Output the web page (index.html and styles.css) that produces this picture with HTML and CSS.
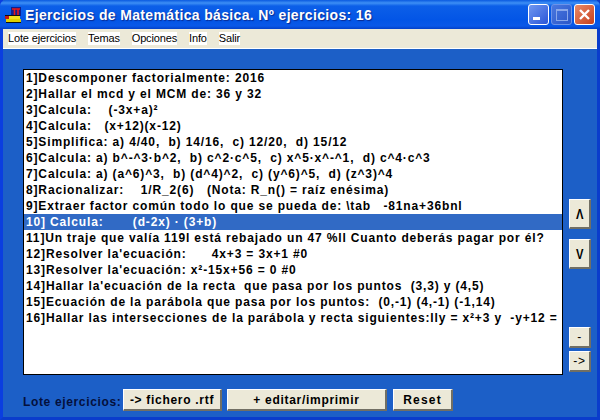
FILE: index.html
```html
<!DOCTYPE html>
<html>
<head>
    <meta charset="UTF-8">
    <title>Ejercicios de Matemática básica</title>
    <link rel="stylesheet" href="styles.css">
</head>
<body>
    <div class="window">
        <div class="titlebar">
            <svg class="app-icon" width="16" height="16" viewBox="0 0 16 16">
                <rect x="6" y="0" width="10" height="9" fill="#10208c"/>
                <path d="M7 2h8M9.5 2v7M13 2v7" stroke="#e81818" stroke-width="1.6" fill="none"/>
                <rect x="0" y="9" width="5" height="3" fill="#c01818"/>
                <rect x="4" y="9" width="11" height="3" fill="#f0e020"/>
                <rect x="1" y="12" width="15" height="3" fill="#e0d000"/>
                <path d="M0 8.5h15M1 15.5h15" stroke="#101010"/>
            </svg>
            <span class="title-text">Ejercicios de Matemática básica. Nº ejercicios: 16</span>
            <div class="title-buttons">
                <div class="wbtn wbtn-min"><span class="min-bar"></span></div>
                <div class="wbtn wbtn-max"><span class="max-box"></span></div>
                <div class="wbtn wbtn-close">
                    <svg width="13" height="13" viewBox="0 0 13 13"><path d="M2 2l9 9M11 2l-9 9" stroke="#fff" stroke-width="2.4"/></svg>
                </div>
            </div>
        </div>

        <div class="menubar">
            <span class="menu-item">Lote ejercicios</span>
            <span class="menu-item">Temas</span>
            <span class="menu-item">Opciones</span>
            <span class="menu-item">Info</span>
            <span class="menu-item">Salir</span>
        </div>

        <div class="content">
            <div class="main-row">
                <div class="listbox">
                    <div class="row">1]Descomponer factorialmente: 2016</div>
                    <div class="row">2]Hallar el mcd y el MCM de: 36 y 32</div>
                    <div class="row">3]Calcula:    (-3x+a)²</div>
                    <div class="row">4]Calcula:   (x+12)(x-12)</div>
                    <div class="row">5]Simplifica: a) 4/40,  b) 14/16,  c) 12/20,  d) 15/12</div>
                    <div class="row">6]Calcula: a) b^-^3·b^2,  b) c^2·c^5,  c) x^5·x^-^1,  d) c^4·c^3</div>
                    <div class="row">7]Calcula: a) (a^6)^3,  b) (d^4)^2,  c) (y^6)^5,  d) (z^3)^4</div>
                    <div class="row">8]Racionalizar:    1/R_2(6)   (Nota: R_n() = raíz enésima)</div>
                    <div class="row">9]Extraer factor común todo lo que se pueda de: \tab   -81na+36bnl</div>
                    <div class="row selected">10] Calcula:       (d-2x) · (3+b)</div>
                    <div class="row">11]Un traje que valía 119l está rebajado un 47 %ll Cuanto deberás pagar por él?</div>
                    <div class="row">12]Resolver la'ecuación:      4x+3 = 3x+1 #0</div>
                    <div class="row">13]Resolver la'ecuación: x²-15x+56 = 0 #0</div>
                    <div class="row">14]Hallar la'ecuación de la recta  que pasa por los puntos  (3,3) y (4,5)</div>
                    <div class="row">15]Ecuación de la parábola que pasa por los puntos:  (0,-1) (4,-1) (-1,14)</div>
                    <div class="row">16]Hallar las intersecciones de la parábola y recta siguientes:lly = x²+3 y  -y+12 =</div>
                </div>
                <div class="side-buttons">
                    <button class="btn btn-arrow"><span class="arrow-glyph">Λ</span></button>
                    <button class="btn btn-arrow"><span class="arrow-glyph">V</span></button>
                    <div class="side-spacer"></div>
                    <button class="btn btn-small">-</button>
                    <button class="btn btn-small">-&gt;</button>
                </div>
            </div>
            <div class="bottom-row">
                <span class="bottom-label">Lote ejercicios:</span>
                <button class="btn btn-file">-&gt; fichero .rtf</button>
                <button class="btn btn-edit">+ editar/imprimir</button>
                <button class="btn btn-reset">Reset</button>
            </div>
        </div>
    </div>
</body>
</html>
```

FILE: styles.css
```css
:root {
    --xp-blue: #1c5fc7;
    --xp-face: #ece9d8;
}

html, body {
    margin: 0;
    padding: 0;
    width: 600px;
    height: 420px;
    overflow: hidden;
}

body {
    font-family: 'Liberation Sans', Arial, sans-serif;
    color: #000;
}

.window {
    width: 600px;
    height: 420px;
    display: flex;
    flex-direction: column;
    box-sizing: border-box;
    background: var(--xp-blue);
    border-left: 3px solid #0a3ee0;
    border-right: 3px solid #0a3ccc;
    border-bottom: 3px solid #0a3ccc;
}

.titlebar {
    height: 29px;
    margin: 0 -3px;
    padding: 0 5px;
    flex: none;
    display: flex;
    align-items: center;
    background: linear-gradient(to bottom, #0a5ae0 0, #3d8ff5 3px, #0c5fe8 6px, #0355e6 20px, #0a58e8 26px, #0340c8 29px);
    border-radius: 6px 6px 0 0;
}

.app-icon {
    flex: none;
    margin-right: 4px;
}

.title-text {
    color: #fff;
    font-size: 14px;
    font-weight: bold;
    letter-spacing: 0.35px;
    white-space: nowrap;
    text-shadow: 1px 1px 1px #0a2a90;
}

.title-buttons {
    margin-left: auto;
    display: flex;
    gap: 2px;
}

.wbtn {
    width: 21px;
    height: 21px;
    box-sizing: border-box;
    border: 1px solid #fff;
    border-radius: 3px;
    display: flex;
    align-items: center;
    justify-content: center;
}

.wbtn-min { background: linear-gradient(135deg, #6f97f0, #2a56d8); }
.wbtn-max { background: linear-gradient(135deg, #4a78e0, #2a56c8); border-color: #6d93e8; }
.wbtn-close { background: linear-gradient(135deg, #e88a68, #c8401c); }

.min-bar {
    width: 7px;
    height: 3px;
    background: #fff;
    margin: 8px 5px 0 0;
}

.max-box {
    width: 10px;
    height: 9px;
    border: 1px solid #8aa8ea;
    border-top-width: 2px;
}

.menubar {
    height: 19px;
    flex: none;
    padding: 0 0 0 5px;
    display: flex;
    align-items: center;
    background: var(--xp-face);
    border-bottom: 1px solid #fff;
}

.menu-item {
    margin-right: 12px;
    background: #fff;
    font-size: 11px;
    letter-spacing: -0.15px;
    line-height: 13px;
}

.content {
    flex: 1;
    padding: 20px 6px 6px 20px;
    display: flex;
    flex-direction: column;
    min-height: 0;
}

.main-row {
    display: flex;
    height: 306px;
    flex: none;
}

.listbox {
    width: 540px;
    box-sizing: border-box;
    background: #fff;
    border: 1px solid #000;
    overflow: hidden;
}

.row {
    height: 16px;
    line-height: 16px;
    padding-left: 2px;
    font-size: 12px;
    font-weight: bold;
    letter-spacing: 0.85px;
    white-space: pre;
}

.row.selected {
    background: #316ac5;
    color: #fff;
}

.side-buttons {
    margin-left: 6px;
    width: 22px;
    padding: 130px 0 3px;
    display: flex;
    flex-direction: column;
    box-sizing: border-box;
}

.side-spacer {
    flex: 1;
}

.btn {
    margin: 0;
    padding: 0;
    box-sizing: border-box;
    background: var(--xp-face);
    color: #000;
    font-family: 'Liberation Sans', Arial, sans-serif;
    font-size: 12px;
    font-weight: bold;
    letter-spacing: 0.7px;
    border: 1px solid;
    border-color: #fff #716f64 #716f64 #fff;
    border-right-width: 2px;
    border-bottom-width: 2px;
}

.btn-arrow {
    width: 22px;
    height: 30px;
    font-size: 14px;
    letter-spacing: 0;
    margin-bottom: 10px;
}

.arrow-glyph {
    display: inline-block;
    transform: scaleX(0.8);
}

.btn-small {
    width: 22px;
    height: 21px;
    font-weight: normal;
    margin-top: 3px;
}

.bottom-row {
    margin-top: 14px;
    display: flex;
    align-items: center;
}

.bottom-label {
    width: 100px;
    flex: none;
    margin-top: 4px;
    color: #04103c;
    font-size: 12px;
    font-weight: bold;
    letter-spacing: 0.65px;
    white-space: nowrap;
}

.btn-file { width: 99px; height: 22px; margin-right: 5px; }
.btn-edit { width: 160px; height: 22px; margin-right: 6px; }
.btn-reset { width: 60px; height: 22px; letter-spacing: 1.2px; }
```
